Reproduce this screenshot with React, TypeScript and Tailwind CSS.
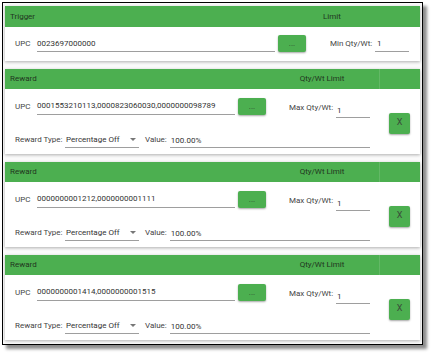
const rewards = [
    { upc: '0001553210113,0000823060030,0000000098789' },
    { upc: '0000000001212,0000000001111' },
    { upc: '0000000001414,0000000001515' },
];

function Caret() {
    return (
        <svg width="6" height="3" viewBox="0 0 6 3" className="ml-auto mr-[3px]">
            <path d="M0 0h6L3 3z" fill="#777" />
        </svg>
    );
}

function DotsButton() {
    return (
        <button className="w-[28px] h-[17px] bg-[#4caf50] rounded-[2px] shadow-[0_1px_2px_rgba(0,0,0,0.35)] text-[#2f4f30] text-[8px] leading-[10px] flex items-center justify-center">
            ...
        </button>
    );
}

function TriggerCard() {
    return (
        <div className="bg-white shadow-[0_1px_3px_rgba(0,0,0,0.3)]">
            <div className="h-[21px] bg-[#4caf50] flex items-center text-[#22361f]">
                <span className="pl-[5px] w-[318px]">Trigger</span>
                <span>Limit</span>
            </div>
            <div className="h-[34px] pt-[8px]">
                <div className="flex items-end h-[17px]">
                    <span className="ml-[10px] w-[22px] leading-[16px] text-[#444]">UPC</span>
                    <div className="w-[238px] h-[16px] leading-[15px] border-b border-[#9e9e9e] text-[#333]">
                        0023697000000
                    </div>
                    <div className="ml-[3px]">
                        <DotsButton />
                    </div>
                    <span className="ml-[24px] w-[45px] leading-[16px] text-[#444] whitespace-nowrap">Min Qty/Wt:</span>
                    <div className="w-[34px] h-[16px] leading-[15px] border-b border-[#9e9e9e] text-[#333] pl-[2px]">1</div>
                </div>
            </div>
        </div>
    );
}

function RewardCard({ upc }: { upc: string }) {
    return (
        <div className="bg-white shadow-[0_1px_3px_rgba(0,0,0,0.3)]">
            <div className="h-[20px] bg-[#4caf50] flex items-center text-[#22361f]">
                <span className="pl-[5px] w-[260px]">Reward</span>
                <span className="w-[114px] text-center">Qty/Wt Limit</span>
                <span className="h-full flex-1 border-l border-[#63b866]" />
            </div>
            <div className="h-[65px] flex">
                <div className="w-[374px] pt-[9px] flex flex-col">
                    <div className="flex items-end h-[17px]">
                        <span className="ml-[10px] w-[22px] leading-[16px] text-[#444]">UPC</span>
                        <div className="w-[198px] h-[16px] leading-[14px] border-b border-[#9e9e9e] text-[#333] whitespace-nowrap">
                            {upc}
                        </div>
                        <div className="ml-[3px]">
                            <DotsButton />
                        </div>
                        <div className="flex items-end mb-[-3px]">
                            <span className="ml-[23px] w-[47px] leading-[12px] text-[#444] self-start whitespace-nowrap">Max Qty/Wt:</span>
                            <div className="w-[34px] h-[16px] leading-[18px] border-b border-[#9e9e9e] text-[#333] pl-[1px]">1</div>
                        </div>
                    </div>
                    <div className="flex items-end h-[16px] mt-[17px]">
                        <span className="ml-[10px] w-[50px] leading-[16px] text-[#444] whitespace-nowrap">Reward Type:</span>
                        <div className="w-[74px] h-[16px] border-b border-[#9e9e9e] text-[#333] flex items-center pl-[1px]">
                            <span className="leading-[18px]">Percentage Off</span>
                            <Caret />
                        </div>
                        <span className="ml-[6px] mr-[3px] leading-[16px] text-[#444] whitespace-nowrap">Value:</span>
                        <div className="w-[200px] h-[16px] leading-[18px] border-b border-[#9e9e9e] text-[#333] pl-[1px]">
                            100.00%
                        </div>
                    </div>
                </div>
                <div className="flex-1 flex items-center justify-center pt-[3px]">
                    <button className="w-[21px] h-[21px] bg-[#4caf50] rounded-[2px] shadow-[0_1px_2px_rgba(0,0,0,0.35)] text-[#3a4a3a] text-[9px] flex items-center justify-center">
                        X
                    </button>
                </div>
            </div>
        </div>
    );
}

export default function App() {
    return (
        <div className="w-[432px] h-[353px] bg-white pl-[2px] pt-[2px] text-[8px] font-['Roboto',sans-serif]">
            <div className="w-[421px] h-[343px] border border-black bg-[#fafafa] shadow-[4px_4px_3px_rgba(0,0,0,0.45)] pl-[2px] pr-[2px] pt-[3px] flex flex-col gap-[8px]">
                <TriggerCard />
                {rewards.map((r) => (
                    <RewardCard key={r.upc} upc={r.upc} />
                ))}
            </div>
        </div>
    );
}
